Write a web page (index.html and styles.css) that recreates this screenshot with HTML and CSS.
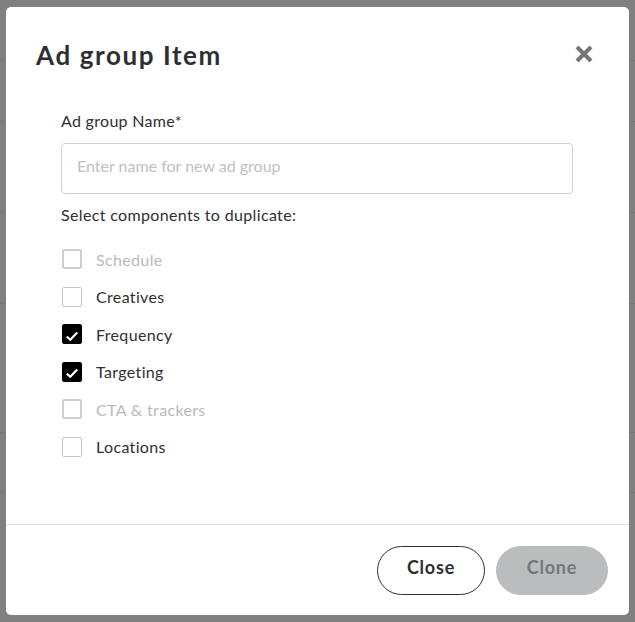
FILE: index.html
```html
<!DOCTYPE html>
<html lang="en">
<head>
<meta charset="utf-8">
<title>Ad group Item</title>
<link rel="stylesheet" href="styles.css">
</head>
<body>
<div class="modal">
  <div class="modal-header">
    <h1 class="title">Ad group Item</h1>
    <button class="close-x" aria-label="Close">
      <svg width="18" height="18" viewBox="0 0 18 18"><path d="M2 2 L16 16 M16 2 L2 16" stroke="#767676" stroke-width="4" stroke-linecap="butt"/></svg>
    </button>
  </div>
  <div class="modal-body">
    <label class="field-label">Ad group Name*</label>
    <input class="text-input" type="text" placeholder="Enter name for new ad group">
    <div class="section-label">Select components to duplicate:</div>
    <ul class="options">
      <li class="option disabled"><span class="box"></span><span class="opt-text">Schedule</span></li>
      <li class="option"><span class="box"></span><span class="opt-text">Creatives</span></li>
      <li class="option checked"><span class="box"><svg width="14" height="12" viewBox="0 0 14 12"><path d="M1.8 6.6 L5.3 9.8 L12.2 2.4" fill="none" stroke="#fff" stroke-width="2.2"/></svg></span><span class="opt-text">Frequency</span></li>
      <li class="option checked"><span class="box"><svg width="14" height="12" viewBox="0 0 14 12"><path d="M1.8 6.6 L5.3 9.8 L12.2 2.4" fill="none" stroke="#fff" stroke-width="2.2"/></svg></span><span class="opt-text">Targeting</span></li>
      <li class="option disabled"><span class="box"></span><span class="opt-text">CTA &amp; trackers</span></li>
      <li class="option"><span class="box"></span><span class="opt-text">Locations</span></li>
    </ul>
  </div>
  <div class="modal-footer">
    <button class="btn btn-outline">Close</button>
    <button class="btn btn-disabled" disabled>Clone</button>
  </div>
</div>
</body>
</html>
```
FILE: styles.css
```css
* { box-sizing: border-box; }
html, body { margin: 0; padding: 0; }
body {
  width: 635px;
  height: 622px;
  overflow: hidden;
  font-family: Lato, "Open Sans", Arial, sans-serif;
  color: #2e2f32;
  background-color: #808080;
  background-image:
    linear-gradient(#767676, #767676),
    linear-gradient(#767676, #767676),
    linear-gradient(#767676, #767676),
    linear-gradient(#767676, #767676),
    linear-gradient(#767676, #767676),
    linear-gradient(#767676, #767676);
  background-repeat: no-repeat;
  background-size: 100% 1px;
  background-position: 0 60px, 0 121px, 0 212px, 0 303px, 0 432px, 0 492px;
  padding: 7px 6px;
}
.modal {
  width: 623px;
  height: 608px;
  background: #fff;
  border-radius: 5px;
  display: flex;
  flex-direction: column;
}
.modal-header {
  display: flex;
  justify-content: space-between;
  align-items: flex-start;
  padding: 32px 36px 0 30px;
}
.title {
  margin: 0;
  font-size: 26px;
  line-height: 32px;
  font-weight: 700;
  letter-spacing: 1.6px;
  color: #2e2f32;
}
.close-x {
  margin-top: 6px;
  padding: 0;
  border: 0;
  background: none;
  width: 18px;
  height: 18px;
  display: block;
}
.close-x svg { display: block; }
.modal-body {
  flex: 1;
  padding: 40px 56px 0 55px;
  display: flex;
  flex-direction: column;
}
.field-label {
  font-size: 16px;
  line-height: 20px;
  letter-spacing: 0.3px;
  color: #2e2f32;
}
.text-input {
  margin-top: 12px;
  height: 51px;
  width: 512px;
  border: 1px solid #d2d2d2;
  border-radius: 4px;
  padding: 0 15px 7px 15px;
  font-family: inherit;
  font-size: 16px;
  color: #2e2f32;
  outline: none;
}
.text-input::placeholder { color: #c0c0c0; }
.section-label {
  margin-top: 11px;
  font-size: 16px;
  line-height: 20px;
  letter-spacing: 0.35px;
  color: #2e2f32;
}
.options {
  list-style: none;
  margin: 24px 0 0 0;
  padding: 0 0 0 1px;
  display: flex;
  flex-direction: column;
  gap: 17.5px;
}
.option {
  display: flex;
  align-items: center;
  height: 20px;
  gap: 14px;
  font-size: 16px;
  letter-spacing: 0.35px;
}
.box {
  width: 20px;
  height: 20px;
  border: 1px solid #c6c6c6;
  border-radius: 2px;
  display: flex;
  align-items: center;
  justify-content: center;
  flex: none;
}
.option.disabled .box { border: 2px solid #cfcfcf; }
.option.disabled .opt-text { color: #b9b9b9; }
.option.checked .box { background: #000; border-color: #000; }
.option.checked .box svg { margin-top: 3px; }
.modal-footer {
  border-top: 1px solid #e2e2e2;
  height: 91px;
  display: flex;
  justify-content: flex-end;
  align-items: flex-start;
  gap: 11px;
  padding: 21px 21px 0 0;
}
.btn {
  height: 49px;
  border-radius: 25px;
  font-family: inherit;
  font-size: 18px;
  font-weight: 700;
  letter-spacing: 0.8px;
  padding: 0 0 7px 0;
}
.btn-outline {
  width: 108px;
  background: #fff;
  border: 1px solid #2e2f32;
  color: #2e2f32;
}
.btn-disabled {
  width: 112px;
  background: #bbbcbe;
  border: 1px solid #bbbcbe;
  color: #74767c;
}
```
